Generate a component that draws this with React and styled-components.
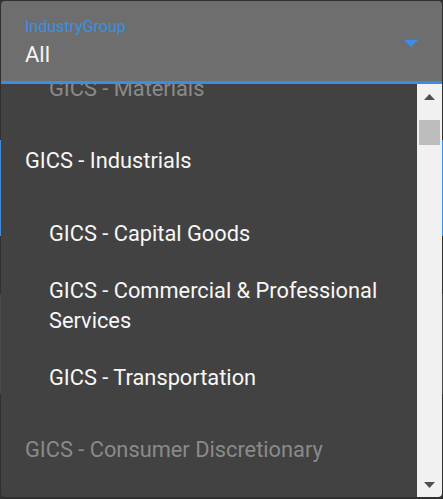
import React, { useLayoutEffect, useRef } from "react";
import styled, { createGlobalStyle } from "styled-components";

const GlobalStyle = createGlobalStyle`
  html, body {
    margin: 0;
    padding: 0;
    background: #303030;
  }
  body {
    font-family: Roboto, "Noto Sans", sans-serif;
    overflow: hidden;
  }
`;

const Page = styled.div`
  position: relative;
  width: 443px;
  height: 499px;
  padding-top: 1px;
  box-sizing: border-box;
`;

const Field = styled.div`
  margin: 0 1px;
  height: 83px;
  background: #6e6e6e;
  border-radius: 4px 4px 0 0;
  border-bottom: 3px solid #3a8ee6;
  box-sizing: border-box;
  display: flex;
  align-items: flex-start;
  padding: 17px 24px 0;
`;

const FieldText = styled.div`
  flex: 1;
  display: flex;
  flex-direction: column;
  gap: 4px;
`;

const Label = styled.span`
  font-size: 16px;
  line-height: 18px;
  color: #3a8ee6;
`;

const Value = styled.span`
  font-size: 22px;
  line-height: 30px;
  color: #f5f5f5;
`;

const Caret = styled.svg`
  width: 14px;
  height: 7px;
  margin-top: 22px;
`;

const Behind = styled.div`
  margin-top: 56px;
  height: 96px;
  border: 1px solid #3a8ee6;
  box-sizing: border-box;
`;

const BehindRow = styled.div`
  margin-top: 58px;
  height: 100px;
  border-left: 1px solid #4a4a4a;
  border-right: 1px solid #4a4a4a;
  box-sizing: border-box;
`;

const Menu = styled.div`
  position: absolute;
  top: 84px;
  left: 1px;
  right: 1px;
  height: 413px;
  background: #424242;
  border-radius: 0 0 4px 4px;
  overflow: hidden;
  display: flex;
`;

const List = styled.ul`
  flex: 1;
  margin: 0;
  padding: 0;
  list-style: none;
  overflow: hidden;
`;

const Option = styled.li`
  padding: ${(p) => (p.$group ? "29px 16px 29px 24px" : "14px 16px 13px 48px")};
  font-size: 21.8px;
  line-height: 30px;
  color: ${(p) => (p.$dim ? "#8a8a8a" : "#f7f7f7")};
`;

const Scrollbar = styled.div`
  width: 25px;
  background: #f1f1f1;
  display: flex;
  flex-direction: column;
`;

const ArrowButton = styled.div`
  height: 25px;
  display: flex;
  align-items: center;
  justify-content: center;
`;

const Track = styled.div`
  flex: 1;
  padding-top: 11px;
`;

const Thumb = styled.div`
  margin-left: 2px;
  width: 21px;
  height: 25px;
  background: #bdbdbd;
`;

const options = [
  { label: "GICS - Materials", dim: true },
  { label: "GICS - Industrials", group: true },
  { label: "GICS - Capital Goods" },
  { label: "GICS - Commercial & Professional Services" },
  { label: "GICS - Transportation" },
  { label: "GICS - Consumer Discretionary", group: true, dim: true },
  { label: "GICS - Automobiles & Components", dim: true },
];

const Tri = ({ up }) => (
  <svg width="11" height="6" viewBox="0 0 11 6">
    <path d={up ? "M0 6 L5.5 0 L11 6 Z" : "M0 0 L5.5 6 L11 0 Z"} fill="#505050" />
  </svg>
);

export default function App() {
  const listRef = useRef(null);

  useLayoutEffect(() => {
    if (listRef.current) listRef.current.scrollTop = 24;
  }, []);

  return (
    <>
      <GlobalStyle />
      <Page>
        <Field>
          <FieldText>
            <Label>IndustryGroup</Label>
            <Value>All</Value>
          </FieldText>
          <Caret viewBox="0 0 14 7">
            <path d="M0 0 L7 7 L14 0 Z" fill="#3a8ee6" />
          </Caret>
        </Field>
        <Behind />
        <BehindRow />
        <Menu>
          <List ref={listRef}>
            {options.map((o) => (
              <Option key={o.label} $group={o.group} $dim={o.dim}>
                {o.label}
              </Option>
            ))}
          </List>
          <Scrollbar>
            <ArrowButton>
              <Tri up />
            </ArrowButton>
            <Track>
              <Thumb />
            </Track>
            <ArrowButton>
              <Tri />
            </ArrowButton>
          </Scrollbar>
        </Menu>
      </Page>
    </>
  );
}
